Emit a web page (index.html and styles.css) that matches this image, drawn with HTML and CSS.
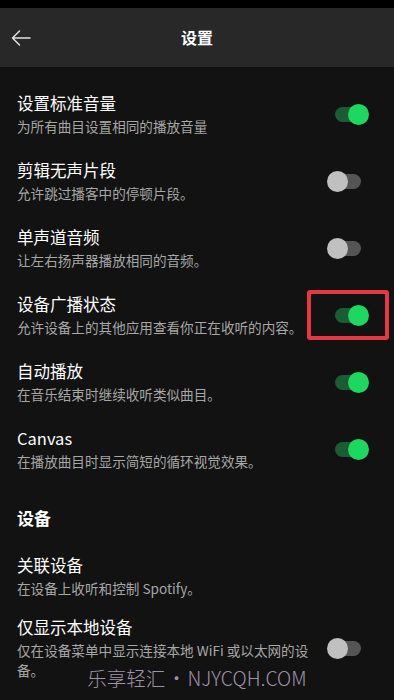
FILE: index.html
```html
<!DOCTYPE html>
<html lang="zh-CN">
<head>
<meta charset="utf-8">
<title>设置</title>
<link rel="stylesheet" href="styles.css">
</head>
<body>
<div class="statusbar"></div>
<header class="topbar">
  <button class="back" aria-label="返回">
    <svg width="20" height="16" viewBox="0 0 20 16" fill="none" stroke="#e0e0e0" stroke-width="1.5" stroke-linecap="round" stroke-linejoin="round"><path d="M19 8H1.5M8.5 1L1.5 8l7 7"/></svg>
  </button>
  <h1 class="title">设置</h1>
  <span></span>
</header>
<main class="list">
  <div class="row">
    <div class="text"><div class="name">设置标准音量</div><div class="desc">为所有曲目设置相同的播放音量</div></div>
    <div class="toggle on"></div>
  </div>
  <div class="row">
    <div class="text"><div class="name">剪辑无声片段</div><div class="desc">允许跳过播客中的停顿片段。</div></div>
    <div class="toggle off"></div>
  </div>
  <div class="row">
    <div class="text"><div class="name">单声道音频</div><div class="desc">让左右扬声器播放相同的音频。</div></div>
    <div class="toggle off"></div>
  </div>
  <div class="row">
    <div class="text"><div class="name">设备广播状态</div><div class="desc">允许设备上的其他应用查看你正在收听的内容。</div></div>
    <div class="toggle on marked"><span class="mark"></span></div>
  </div>
  <div class="row">
    <div class="text"><div class="name">自动播放</div><div class="desc">在音乐结束时继续收听类似曲目。</div></div>
    <div class="toggle on"></div>
  </div>
  <div class="row">
    <div class="text"><div class="name">Canvas</div><div class="desc">在播放曲目时显示简短的循环视觉效果。</div></div>
    <div class="toggle on"></div>
  </div>
  <h2 class="section">设备</h2>
  <div class="row linked">
    <div class="text"><div class="name">关联设备</div><div class="desc">在设备上收听和控制 Spotify。</div></div>
  </div>
  <div class="row local">
    <div class="text"><div class="name">仅显示本地设备</div><div class="desc">仅在设备菜单中显示连接本地 WiFi 或以太网的设备。</div></div>
    <div class="toggle off"></div>
  </div>
</main>
<div class="watermark">乐享轻汇 • NJYCQH.COM</div>
<div class="navbar"></div>
</body>
</html>
```
FILE: styles.css
```css
* { box-sizing: border-box; }
html, body { margin: 0; padding: 0; }
body {
  width: 394px;
  height: 700px;
  overflow: hidden;
  background: #121212;
  color: #ffffff;
  font-family: "Noto Sans CJK SC", "Noto Sans", sans-serif;
  display: flex;
  flex-direction: column;
  position: relative;
}
.statusbar { height: 8px; background: #000; flex: none; }
.topbar {
  height: 59px;
  flex: none;
  background: #282828;
  display: grid;
  grid-template-columns: 1fr auto 1fr;
  align-items: center;
}
.back {
  justify-self: start;
  margin-left: 11px;
  padding: 0;
  border: 0;
  background: none;
  display: flex;
}
.title {
  margin: -1px 0 0;
  font-size: 16px;
  font-weight: 700;
  line-height: 22px;
}
.list {
  flex: 1;
  padding-top: 25px;
  display: flex;
  flex-direction: column;
}
.row {
  display: flex;
  align-items: center;
  gap: 10px;
  padding: 0 25px 0 17px;
  margin-bottom: 23px;
}
.text { flex: 1; min-width: 0; }
.name {
  font-size: 16.5px;
  line-height: 22px;
  color: #ffffff;
}
.desc {
  font-size: 13.6px;
  line-height: 20px;
  padding-top: 2px;
  color: #a7a7a7;
}
.section {
  margin: 12px 0 0 17px;
  font-size: 17px;
  font-weight: 700;
  line-height: 24px;
}
.linked { margin-top: 24px; margin-bottom: 18px; }
.toggle {
  position: relative;
  width: 42px;
  height: 21px;
  flex: none;
}
.toggle::before {
  content: "";
  position: absolute;
  left: 8px;
  right: 8px;
  top: 3px;
  height: 15px;
  border-radius: 8px;
}
.toggle::after {
  content: "";
  position: absolute;
  top: 0;
  width: 21px;
  height: 21px;
  border-radius: 50%;
}
.toggle.on::before { background: #1a5c33; }
.toggle.on::after { right: 0; background: #1ed760; }
.toggle.off::before { background: #555555; }
.toggle.off::after { left: 0; background: #c0c0c0; }
.mark {
  position: absolute;
  left: -20px;
  top: -15px;
  width: 82px;
  height: 50px;
  border: 4px solid #e43843;
  border-radius: 3px;
}
.watermark {
  position: absolute;
  left: 0;
  right: 0;
  bottom: 10px;
  text-align: center;
  font-size: 19.5px;
  line-height: 24px;
  word-spacing: -3px;
  color: #a093a8;
  font-weight: 300;
}
.navbar { height: 8px; background: #000; flex: none; }
```
